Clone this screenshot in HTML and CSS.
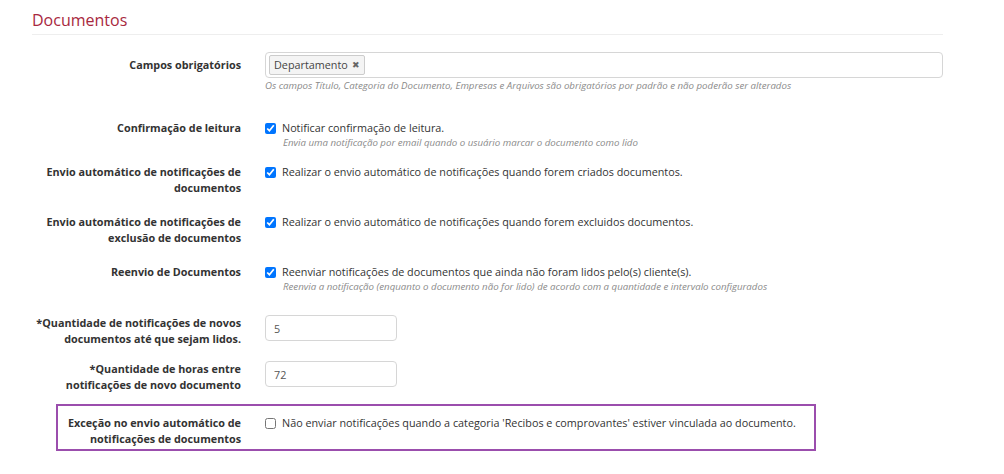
FILE: index.html
```html
<!DOCTYPE html>
<html lang="pt-BR">
<head>
<meta charset="utf-8">
<title>Documentos</title>
<link rel="stylesheet" href="styles.css">
</head>
<body>
<section class="panel">
  <h2 class="title">Documentos</h2>

  <div class="row row-campos">
    <div class="label label-input">Campos obrigatórios</div>
    <div class="control">
      <div class="multiselect">
        <span class="tag">Departamento <span class="tag-x">✖</span></span>
      </div>
      <div class="help">Os campos Título, Categoria do Documento, Empresas e Arquivos são obrigatórios por padrão e não poderão ser alterados</div>
    </div>
  </div>

  <div class="row row-leitura">
    <div class="label">Confirmação de leitura</div>
    <div class="control">
      <label class="check"><input type="checkbox" checked> Notificar confirmação de leitura.</label>
      <div class="help help-indent">Envia uma notificação por email quando o usuário marcar o documento como lido</div>
    </div>
  </div>

  <div class="row row-envio">
    <div class="label">Envio automático de notificações de documentos</div>
    <div class="control">
      <label class="check"><input type="checkbox" checked> Realizar o envio automático de notificações quando forem criados documentos.</label>
    </div>
  </div>

  <div class="row row-exclusao">
    <div class="label">Envio automático de notificações de exclusão de documentos</div>
    <div class="control">
      <label class="check"><input type="checkbox" checked> Realizar o envio automático de notificações quando forem excluidos documentos.</label>
    </div>
  </div>

  <div class="row row-reenvio">
    <div class="label">Reenvio de Documentos</div>
    <div class="control">
      <label class="check"><input type="checkbox" checked> Reenviar notificações de documentos que ainda não foram lidos pelo(s) cliente(s).</label>
      <div class="help help-indent">Reenvia a notificação (enquanto o documento não for lido) de acordo com a quantidade e intervalo configurados</div>
    </div>
  </div>

  <div class="row row-qtd">
    <div class="label">*Quantidade de notificações de novos documentos até que sejam lidos.</div>
    <div class="control">
      <input class="text-input" type="text" value="5">
    </div>
  </div>

  <div class="row row-horas">
    <div class="label">*Quantidade de horas entre notificações de novo documento</div>
    <div class="control">
      <input class="text-input" type="text" value="72">
    </div>
  </div>

  <div class="highlight">
    <div class="row row-excecao">
      <div class="label">Exceção no envio automático de notificações de documentos</div>
      <div class="control">
        <label class="check"><input type="checkbox"> Não enviar notificações quando a categoria 'Recibos e comprovantes' estiver vinculada ao documento.</label>
      </div>
    </div>
  </div>
</section>
</body>
</html>
```

FILE: styles.css
```css
* { box-sizing: border-box; }

body {
  margin: 0;
  background: #ffffff;
  font-family: "Open Sans", "Liberation Sans", sans-serif;
  font-size: 10.8px;
  color: #333333;
}

.panel {
  margin-left: 32px;
  width: 911px;
}

.title {
  margin: 8px 0 0 0;
  padding-bottom: 2px;
  font-size: 16px;
  line-height: 24px;
  font-weight: 400;
  color: #a8283e;
  border-bottom: 1px solid #eeeeee;
}

.row {
  display: grid;
  grid-template-columns: 209px 1fr;
  column-gap: 24px;
  align-items: start;
}

.label {
  text-align: right;
  font-weight: 700;
  line-height: 16px;
  color: #333333;
}

.label-input { padding-top: 5px; }

.control { line-height: 16px; }

.row-campos { margin-top: 17px; }
.row-leitura { margin-top: 27px; }
.row-envio { margin-top: 14px; }
.row-exclusao { margin-top: 18px; }
.row-reenvio { margin-top: 18px; }
.row-qtd { margin-top: 21px; }
.row-horas { margin-top: 14px; }

.multiselect {
  height: 26px;
  border: 1px solid #d6d6d6;
  border-radius: 4px;
  padding: 2px 3px;
  display: flex;
  align-items: center;
}

.tag {
  display: inline-flex;
  align-items: center;
  height: 20px;
  padding: 0 4px;
  border: 1px solid #cccccc;
  border-radius: 2px;
  background: #f4f4f4;
  color: #444444;
  font-size: 10.8px;
}

.tag-x {
  margin-left: 4px;
  font-size: 9px;
  color: #666666;
}

.help {
  margin-top: 1px;
  font-size: 9.7px;
  line-height: 14px;
  font-style: italic;
  color: #8a8a8a;
}

.help-indent {
  margin-top: 0;
  padding-left: 18px;
}

.check {
  display: flex;
  align-items: center;
  color: #333333;
}

.check input {
  width: 11px;
  height: 11px;
  margin: 0 6px 0 0;
  flex: none;
}

.text-input {
  width: 132px;
  height: 26px;
  border: 1px solid #d6d6d6;
  border-radius: 4px;
  padding: 0 8px;
  font-family: inherit;
  font-size: 10.8px;
  color: #555555;
  outline: none;
}

.highlight {
  margin-top: 11px;
  margin-left: 24px;
  width: 760px;
  border: 2px solid #9b4ead;
  padding: 9px 0 2px 0;
}

.row-excecao {
  grid-template-columns: 183px 1fr;
}
```
